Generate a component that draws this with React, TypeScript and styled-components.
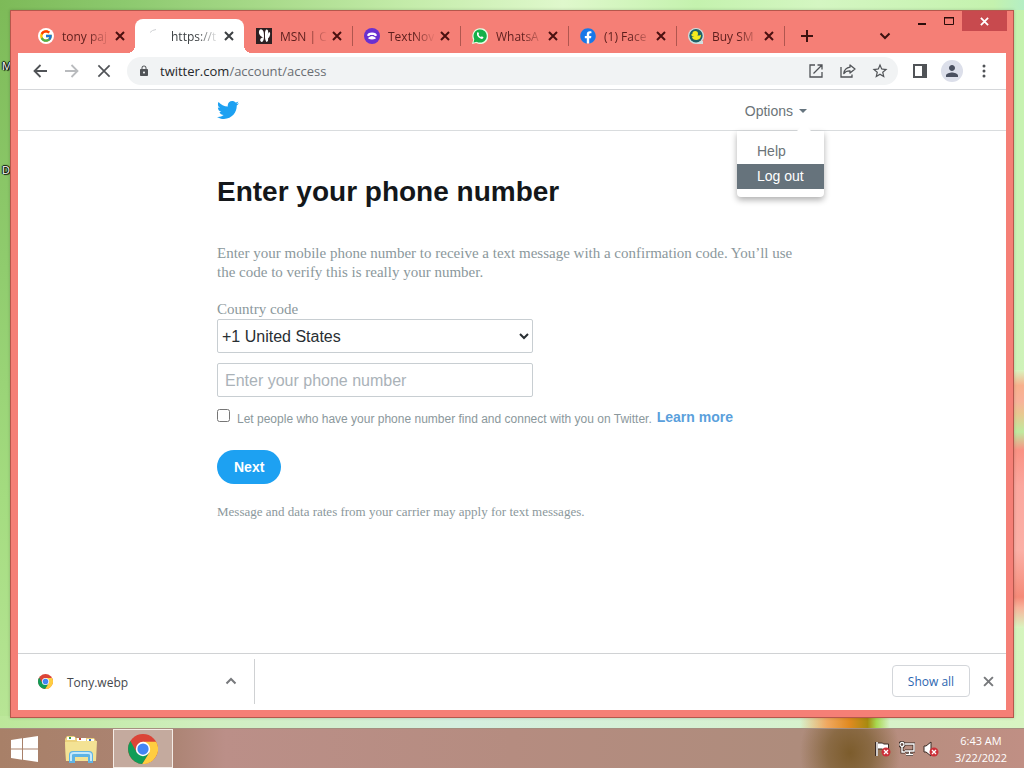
import React from "react";
import styled, { createGlobalStyle, css } from "styled-components";
import { FaTwitter, FaFacebook, FaWhatsapp } from "react-icons/fa";
import { FcGoogle } from "react-icons/fc";
import { MdOutlineStarBorder, MdLock, MdPerson } from "react-icons/md";

const uiFont = '"Open Sans", "Noto Sans", sans-serif';
const pageFont = '"Liberation Sans", Arial, sans-serif';
const textFont = '"Liberation Serif", "Times New Roman", serif';

const GlobalStyle = createGlobalStyle`
  *, *::before, *::after { box-sizing: border-box; }
  body { margin: 0; }
  h1, p { margin: 0; }
  button { font: inherit; color: inherit; background: none; border: 0; padding: 0; }
  svg { display: block; flex: none; }
`;

/* ---------- desktop ---------- */

const Desktop = styled.div`
  position: relative;
  display: flex;
  flex-direction: column;
  min-height: 100vh;
  font-family: ${uiFont};
  background:
    linear-gradient(90deg, transparent 0, #f0a860 30%, #e08a20 55%, #a88a10 75%, #a8d850 85%, transparent 100%) 800px 100% / 90px 52px no-repeat,
    linear-gradient(#d8f5c0 0, #f8b08c 6%, #f8b29a 12%, #e8c890 17%, #bfeaa0 24%, #fa9284 31%, #fba79e 45%, #fbb0a6 70%, #f58a78 88%, #f8b29a 92%, #d8f5c0 100%) right 370px / 12px 258px no-repeat,
    linear-gradient(90deg, #bce79a 0, #d0efbf 20%, #d4efdf 45%, #d8f4c2 100%) left bottom / 100% 52px no-repeat,
    linear-gradient(90deg, #7dba58 0, #8cc96e 12%, #a8da8a 26%, #c4ecaa 40%, #dff8cc 55%, #c4f2ae 68%, #d4f6c2 80%, #c4f2ae 97%, #b4eec4 100%) left top / 100% 10px no-repeat,
    linear-gradient(#7dba58 0, #90cc6e 35%, #a4dc80 65%, #bce79a 100%) left top / 50% 100% no-repeat,
    linear-gradient(#c4f2ae 0, #cdf2b8 40%, #d8f5c0 100%);
`;

const DesktopLabel = styled.span<{ $y: number }>`
  position: absolute;
  left: 2px;
  top: ${(p) => p.$y}px;
  font-size: 11px;
  line-height: 16px;
  color: #fff;
  text-shadow: 1px 1px 1px #000, -1px 0 1px #000, 0 -1px 1px #000, 1px 0 1px #000;
`;

const WorkArea = styled.div`
  position: relative;
  display: flex;
  flex: 1;
  padding: 10px;
`;

const Window = styled.section`
  display: flex;
  flex: 1;
  flex-direction: column;
  min-width: 0;
  padding: 0 7px 7px;
  border: 1px solid #b5574c;
  background: #f57f76;
  box-shadow: 0 0 3px #00000030;
`;

/* ---------- title bar ---------- */

const TitleBar = styled.header`
  display: flex;
  align-items: flex-end;
  height: 42px;
  padding-left: 8px;
`;

const TabList = styled.div`
  display: flex;
`;

const Tab = styled.div<{ $width: number; $active?: boolean; $divider?: boolean }>`
  position: relative;
  display: flex;
  align-items: center;
  width: ${(p) => p.$width}px;
  height: 34px;
  padding: 0 9px 0 12px;
  font-size: 12px;
  color: #5c1e1c;

  ${(p) =>
    p.$divider &&
    css`
      &::after {
        content: "";
        position: absolute;
        right: -1px;
        top: 7px;
        width: 1px;
        height: 20px;
        background: #b0564f;
      }
    `}

  ${(p) =>
    p.$active &&
    css`
      color: #3c4043;
      background: #fff;
      border-radius: 8px 8px 0 0;

      &::before,
      &::after {
        content: "";
        position: absolute;
        bottom: 0;
        width: 8px;
        height: 8px;
      }
      &::before {
        left: -8px;
        background: radial-gradient(circle at 0 0, transparent 8px, #fff 8px);
      }
      &::after {
        right: -8px;
        background: radial-gradient(circle at 100% 0, transparent 8px, #fff 8px);
      }
    `}
`;

const Favicon = styled.span`
  display: flex;
  width: 16px;
  height: 16px;
  margin-right: 8px;
`;

const TabTitle = styled.span`
  flex: 1;
  min-width: 0;
  white-space: nowrap;
  mask-image: linear-gradient(90deg, #000 26px, transparent 48px);
`;

const TabClose = styled.button<{ $dark?: boolean }>`
  display: grid;
  place-items: center;
  width: 12px;
  height: 16px;
  color: ${(p) => (p.$dark ? "#3c4043" : "#4a1010")};
`;

const StripButton = styled.button`
  display: grid;
  place-items: center;
  width: 28px;
  height: 34px;
  margin-left: 9px;
  color: #3d1210;
`;

const Spacer = styled.div`
  flex: 1;
`;

const WindowControls = styled.div`
  display: flex;
  align-self: flex-start;
  margin: 0 -1px 0 9px;
`;

const WindowButton = styled.button<{ $close?: boolean }>`
  display: grid;
  place-items: center;
  width: ${(p) => (p.$close ? 45 : 27)}px;
  height: 20px;
  color: ${(p) => (p.$close ? "#fff" : "#2b0c0a")};
  background: ${(p) => (p.$close ? "#c84a4e" : "none")};
`;

/* ---------- toolbar ---------- */

const Toolbar = styled.div`
  display: flex;
  align-items: center;
  height: 37px;
  padding: 0 6px;
  background: #fff;
  border-bottom: 1px solid #d5d7da;
  color: #505357;
`;

const ToolButton = styled.button<{ $muted?: boolean }>`
  display: grid;
  place-items: center;
  width: 32px;
  height: 28px;
  color: ${(p) => (p.$muted ? "#b9bbbe" : "inherit")};
`;

const Omnibox = styled.div`
  display: flex;
  flex: 1;
  align-items: center;
  min-width: 0;
  height: 28px;
  margin: 0 6px 0 7px;
  padding: 0 2px 0 11px;
  border-radius: 14px;
  background: #f1f3f4;
`;

const Address = styled.div`
  flex: 1;
  min-width: 0;
  margin-left: 10px;
  overflow: hidden;
  white-space: nowrap;
  font-size: 13px;
  color: #6a6e73;
`;

const Host = styled.span`
  color: #26282b;
`;

const Avatar = styled.span`
  display: grid;
  place-items: center;
  width: 22px;
  height: 22px;
  border-radius: 50%;
  background: #dcdfea;
  color: #4a5060;
`;

/* ---------- page ---------- */

const Page = styled.div`
  flex: 1;
  background: #fff;
  font-family: ${pageFont};
`;

const PageHeader = styled.div`
  height: 41px;
  border-bottom: 1px solid #d9dcde;
`;

const Column = styled.div`
  max-width: 590px;
  margin: 0 auto;
`;

const HeaderRow = styled(Column)`
  display: flex;
  align-items: center;
  justify-content: space-between;
  height: 40px;
`;

const BirdLink = styled.a`
  color: #1da1f2;
`;

const OptionsMenu = styled.div`
  position: relative;
`;

const OptionsButton = styled.button`
  display: flex;
  align-items: center;
  gap: 6px;
  height: 40px;
  padding-top: 2px;
  font-size: 14px;
  color: #6c7478;
`;

const Caret = styled.span`
  border: 4px solid transparent;
  border-top-color: #66757f;
  border-bottom: 0;
`;

const Menu = styled.div`
  position: absolute;
  z-index: 1;
  top: 41px;
  right: -17px;
  width: 87px;
  padding: 8px 0;
  background: #fff;
  border-radius: 0 0 4px 4px;
  box-shadow: 0 3px 6px #00000050;

  &::before {
    content: "";
    position: absolute;
    top: -7px;
    right: 12px;
    border: 8px solid transparent;
    border-top: 0;
    border-bottom-color: #fff;
  }
`;

const MenuItem = styled.a<{ $selected?: boolean }>`
  display: block;
  padding-left: 20px;
  font-size: 14px;
  line-height: 25px;
  text-decoration: none;
  color: ${(p) => (p.$selected ? "#fff" : "#6c7478")};
  background: ${(p) => (p.$selected ? "#66737c" : "none")};
`;

const Form = styled.form`
  display: flex;
  flex-direction: column;
  align-items: flex-start;
  padding: 45px 0 24px;
`;

const Title = styled.h1`
  font-size: 28px;
  line-height: 32px;
  color: #14171a;
`;

const Intro = styled.p`
  margin-top: 36px;
  font-family: ${textFont};
  font-size: 15px;
  line-height: 19px;
  color: #8b989c;
`;

const FieldLabel = styled.label`
  margin-top: 18px;
  font-family: ${textFont};
  font-size: 15px;
  line-height: 19px;
  color: #8b989c;
`;

const fieldBox = css`
  width: 316px;
  max-width: 100%;
  height: 34px;
  border: 1px solid #c8ced2;
  border-radius: 2px;
  background: #fff;
  font-family: ${pageFont};
  font-size: 16px;
`;

const CountrySelect = styled.select`
  ${fieldBox}
  padding: 0;
  color: #292f33;
`;

const PhoneInput = styled.input`
  ${fieldBox}
  margin-top: 10px;
  padding: 2px 7px 0;
  color: #292f33;

  &::placeholder {
    color: #aab2b8;
  }
`;

const ConsentRow = styled.div`
  display: flex;
  align-items: center;
  gap: 5px;
  margin-top: 10px;
  height: 20px;
  font-size: 12px;
  color: #8b989c;
`;

const Checkbox = styled.input`
  width: 13px;
  height: 13px;
  margin: 0 2px 4px 0;
`;

const ConsentLabel = styled.label`
  padding-top: 3px;
`;

const LearnMore = styled.a`
  font-size: 14px;
  font-weight: bold;
  text-decoration: none;
  color: #5a9fdc;
`;

const NextButton = styled.button`
  height: 34px;
  margin-top: 23px;
  padding: 0 17px;
  border-radius: 17px;
  background: #1da1f2;
  font-size: 14px;
  font-weight: bold;
  color: #fff;
`;

const RatesNote = styled.p`
  margin-top: 20px;
  font-family: ${textFont};
  font-size: 13px;
  line-height: 16px;
  color: #8b989c;
`;

/* ---------- download shelf ---------- */

const Shelf = styled.div`
  display: flex;
  align-items: center;
  height: 57px;
  padding: 0 8px 2px 20px;
  border-top: 1px solid #d0d2d4;
  background: #fff;
  color: #77797c;
`;

const Download = styled.div`
  display: flex;
  align-items: center;
  width: 217px;
  height: 45px;
  padding-right: 17px;
  border-right: 1px solid #cfd1d3;
`;

const FileName = styled.span`
  flex: 1;
  margin-left: 14px;
  padding-top: 2px;
  font-size: 12px;
  color: #45484c;
`;

const ShowAll = styled.button`
  width: 78px;
  height: 32px;
  margin-right: 8px;
  border: 1px solid #d3d6da;
  border-radius: 4px;
  font-size: 12px;
  font-weight: 500;
  color: #2c66b0;
`;

const ShelfClose = styled.button`
  display: grid;
  place-items: center;
  width: 20px;
  height: 20px;
`;

/* ---------- taskbar ---------- */

const Taskbar = styled.footer`
  position: relative;
  display: flex;
  align-items: center;
  height: 40px;
  padding-right: 17px;
  border-top: 1px solid #a58f80;
  background:
    radial-gradient(50px 60px at 850px 24px, #7c5c2c 0, #84653cdd 45%, transparent 100%),
    linear-gradient(90deg, #a88068 0, #ac8474 17%, #bb8f88 22%, #b58c80 50%, #ae8c7c 78%, #b98e80 90%, #c08f84 100%);
`;

const TaskButton = styled.button<{ $width: number; $running?: boolean }>`
  display: grid;
  place-items: center;
  width: ${(p) => p.$width}px;
  height: 39px;
  border: ${(p) => (p.$running ? "1px solid #f4ece6" : "0")};
  background: ${(p) => (p.$running ? "#c4aa9e" : "none")};
`;

const Tray = styled.div`
  display: flex;
  gap: 8px;
  margin-right: 16px;
`;

const Clock = styled.div`
  font-size: 11px;
  line-height: 17px;
  text-align: center;
  color: #fff;
`;

/* ---------- drawings ---------- */

const Cross = ({ size, weight = 2 }: { size: number; weight?: number }) => (
  <svg width={size} height={size} viewBox="0 0 10 10" fill="none" stroke="currentColor" strokeWidth={weight}>
    <path d="M1 1l8 8M9 1L1 9" />
  </svg>
);

const ChromeLogo = ({ size }: { size: number }) => (
  <svg width={size} height={size} viewBox="0 0 48 48">
    <circle cx="24" cy="24" r="24" fill="#db4437" />
    <path d="M24 12.500h21A24 24 0 0 1 22.500 48L34 29.700z" fill="#ffcd40" />
    <path d="M14 29.700L3.800 11.200A24 24 0 0 0 22.500 48L34 29.700 24 34z" fill="#0f9d58" />
    <circle cx="24" cy="24" r="11.500" fill="#fff" />
    <circle cx="24" cy="24" r="9" fill="#4285f4" />
  </svg>
);

const GoogleIcon = () => (
  <svg width="16" height="16" viewBox="0 0 16 16">
    <circle cx="8" cy="8" r="8" fill="#fff" />
    <FcGoogle x="1" y="1" size={14} />
  </svg>
);

const LoadingIcon = () => (
  <svg width="16" height="16" viewBox="0 0 16 16" fill="none" stroke="#cfd1d4">
    <path d="M3 4.500Q5 2 9 1.500" />
  </svg>
);

const ButterflyIcon = () => (
  <svg width="16" height="16" viewBox="0 0 16 16">
    <path d="M0 0h16v16H0z" fill="#2e2022" />
    <path d="M8 9.500C4.500 9 2.500 6 3 3.500S5 .5 6.500 2 8 6 8 9.500zM8 9.500C5.500 9 3.500 11 4.500 13S7.500 14 8 9.500z" fill="#fff" />
    <path d="M9 9.500C8.500 6 9 2 10.500 1.500s2 2 1.500 4L10 9l3-5q1.500 0 1 3-.5 2-2 3.500.5 3-1.500 3.500S9 12 9 9.500z" fill="#fff" />
    <path d="M8.500 5v9" stroke="#2e2022" />
  </svg>
);

const PhoneIcon = () => (
  <svg width="16" height="16" viewBox="0 0 16 16">
    <circle cx="8" cy="8" r="8" fill="#6a30cf" />
    <path d="M3 7.500Q3.500 4.500 8 4.500t5 3l-2 .8-1.200-1.300H6.200L5 8.300z" fill="#fff" />
    <path d="M4.500 9.500Q6.500 8 8 8t3.500 1.500l.2 1.300q-3.700 1.500-7.400 0z" fill="#fff" />
  </svg>
);

const WhatsAppIcon = () => (
  <svg width="16" height="16" viewBox="0 0 16 16">
    <path d="M0 16l1.200-4.200A8 8 0 1 1 4.200 15z" fill="#e9fbe4" />
    <path d="M1.500 14.500l.9-3.200a6.600 6.600 0 1 1 2.400 2.400z" fill="#17b04a" />
    <FaWhatsapp x="1" y="1" size={14} color="#17b04a" />
    <path d="M5 4.500l1.300-.3.800 1.800-.6.800q.8 1.600 2.500 2.300l.8-.8 1.700.9q-.1 1.600-1.800 1.700Q8 10.800 6.200 9 4.400 7 5 4.500z" fill="#fff" />
  </svg>
);

const FacebookIcon = () => (
  <svg width="16" height="16" viewBox="0 0 16 16">
    <circle cx="8" cy="8.500" r="7" fill="#fff" />
    <FaFacebook size={16} color="#1877e8" />
  </svg>
);

const DuckIcon = () => (
  <svg width="16" height="16" viewBox="0 0 16 16">
    <circle cx="8" cy="8" r="8" fill="#cfe0e0" />
    <path d="M9 13h6v3H9z" fill="#cfe0e0" />
    <circle cx="8" cy="7.800" r="6.700" fill="#1f6066" />
    <circle cx="7.200" cy="5.800" r="2.800" fill="#f4ea1e" />
    <path d="M3 6.500l2-.5 1 2-2 .3z" fill="#f4ea1e" />
    <path d="M4 9q2-1.500 5-1.500 2 .3 4-.8 0 5-4.500 5.300Q4.500 12 4 9z" fill="#f4ea1e" />
  </svg>
);

const WindowsLogo = () => (
  <svg width="27" height="26" viewBox="0 0 27 26" fill="#fff">
    <path d="M0 4l11-1.700V12.500H0zM12 2.200L27 0v12.500H12zM0 13.500h11v10.200L0 22zM12 13.500h15V26l-15-2.200z" />
  </svg>
);

const FolderIcon = () => (
  <svg width="34" height="30" viewBox="0 0 34 30">
    <path d="M1 5l2-3h7l2 2h18l2 3v20H2z" fill="#ecd27c" />
    <path d="M3 3h8v3H3zM13 4h9v3h-9zM23 5h7v3h-7z" fill="#fff" />
    <path d="M5 3h2v2H5z" fill="#3c9b48" />
    <path d="M15 4h2v2h-2z" fill="#c84a38" />
    <path d="M25 5h2v2h-2z" fill="#3a72c0" />
    <path d="M1 8h12l2-1h18l-1 20H2z" fill="#f3e294" />
    <path d="M5 29v-8q0-4 4-4h16q4 0 4 4v8h-5v-6H11v6z" fill="#5fb3e4" />
    <path d="M7 27v-6q0-2 3-2h14q3 0 3 2v6" fill="none" stroke="#c4e8fa" strokeWidth="2" />
  </svg>
);

const TrayError = ({ x }: { x: number }) => (
  <g transform={`translate(${x} 7)`}>
    <circle cx="4" cy="4" r="4.500" fill="#cc3038" />
    <path d="M2 2l4 4M6 2L2 6" stroke="#fff" strokeWidth="1.300" />
  </g>
);

const FlagIcon = () => (
  <svg width="16" height="16" viewBox="0 0 16 16">
    <path d="M1.500 1v14" stroke="#3a2a24" strokeWidth="3" />
    <path d="M2.500 2h5l1 1h5v6h-5l-1-1h-5z" fill="#fff" stroke="#3a2a24" />
    <path d="M2 1v14" stroke="#fff" strokeWidth="1.500" />
    <TrayError x={7} />
  </svg>
);

const NetworkIcon = () => (
  <svg width="16" height="16" viewBox="0 0 16 16" fill="none">
    <path d="M6 3h9v7H6M10.500 10v3M7 13.500h7M3 5v6h3" stroke="#3a2a24" strokeWidth="3" />
    <circle cx="3" cy="3.500" r="2" stroke="#3a2a24" strokeWidth="3" />
    <path d="M6 3h9v7H6M10.500 10v3M7 13.500h7M3 5v6h3" stroke="#fff" strokeWidth="1.400" />
    <circle cx="3" cy="3.500" r="2" stroke="#fff" strokeWidth="1.300" />
  </svg>
);

const SpeakerIcon = () => (
  <svg width="16" height="16" viewBox="0 0 16 16">
    <path d="M1 5h2l5-4v14l-5-4H1z" fill="#fff" stroke="#3a2a24" />
    <TrayError x={7} />
  </svg>
);

const tabs = [
  { title: "tony paj", icon: <GoogleIcon />, width: 109 },
  { title: "https://t", icon: <LoadingIcon />, width: 109, active: true },
  { title: "MSN | C", icon: <ButterflyIcon />, width: 108, divider: true },
  { title: "TextNov", icon: <PhoneIcon />, width: 108, divider: true },
  { title: "WhatsA", icon: <WhatsAppIcon />, width: 108, divider: true },
  { title: "(1) Face", icon: <FacebookIcon />, width: 108, divider: true },
  { title: "Buy SM", icon: <DuckIcon />, width: 108, divider: true },
];

export default function App() {
  return (
    <Desktop>
      <GlobalStyle />
      <DesktopLabel $y={58}>M</DesktopLabel>
      <DesktopLabel $y={162}>D</DesktopLabel>
      <WorkArea>
        <Window>
          <TitleBar>
            <TabList>
              {tabs.map((tab) => (
                <Tab key={tab.title} $width={tab.width} $active={tab.active} $divider={tab.divider}>
                  <Favicon>{tab.icon}</Favicon>
                  <TabTitle>{tab.title}</TabTitle>
                  <TabClose $dark={tab.active} aria-label={`Close ${tab.title}`}>
                    <Cross size={10} />
                  </TabClose>
                </Tab>
              ))}
            </TabList>
            <StripButton aria-label="New tab">
              <svg width="12" height="12" viewBox="0 0 12 12" stroke="currentColor" strokeWidth="2">
                <path d="M6 0v12M0 6h12" />
              </svg>
            </StripButton>
            <Spacer />
            <StripButton aria-label="Search tabs">
              <svg width="12" height="8" viewBox="0 0 12 8" fill="none" stroke="currentColor" strokeWidth="2">
                <path d="M1.500 1.500L6 6l4.500-4.500" />
              </svg>
            </StripButton>
            <WindowControls>
              <WindowButton aria-label="Minimize">
                <svg width="10" height="10" viewBox="0 0 10 10" fill="currentColor">
                  <path d="M1 7h8v2H1z" />
                </svg>
              </WindowButton>
              <WindowButton aria-label="Maximize">
                <svg width="10" height="8" viewBox="0 0 10 8" fill="none" stroke="currentColor">
                  <path d="M.5 1v6.500h9V1M0 1h10" />
                  <path d="M0 .5h10" />
                </svg>
              </WindowButton>
              <WindowButton $close aria-label="Close window">
                <Cross size={9} />
              </WindowButton>
            </WindowControls>
          </TitleBar>

          <Toolbar>
            <ToolButton aria-label="Back">
              <svg width="14" height="14" viewBox="0 0 14 14" fill="none" stroke="currentColor" strokeWidth="1.800">
                <path d="M14 7H1.500M7.500 1L1.500 7l6 6" />
              </svg>
            </ToolButton>
            <ToolButton $muted aria-label="Forward">
              <svg width="14" height="14" viewBox="0 0 14 14" fill="none" stroke="currentColor" strokeWidth="1.800">
                <path d="M0 7h12.500M6.500 1l6 6-6 6" />
              </svg>
            </ToolButton>
            <ToolButton aria-label="Stop loading">
              <Cross size={14} weight={1.2} />
            </ToolButton>
            <Omnibox>
              <MdLock size={12} />
              <Address>
                <Host>twitter.com</Host>/account/access
              </Address>
              <ToolButton aria-label="Open in new window">
                <svg width="14" height="14" viewBox="0 0 14 14" fill="none" stroke="currentColor" strokeWidth="1.300">
                  <path d="M6 1H1v12h12V8M8.500 1H13v4.500M13 1L4.500 9.500" />
                </svg>
              </ToolButton>
              <ToolButton aria-label="Share">
                <svg width="16" height="14" viewBox="0 0 16 14" fill="none" stroke="currentColor" strokeWidth="1.300">
                  <path d="M1 3v10h11v-2.500" />
                  <path d="M10 1l5 4-5 4V6.800Q6 6.600 3.800 9.500 4.500 4 10 3.200z" strokeLinejoin="round" />
                </svg>
              </ToolButton>
              <ToolButton aria-label="Bookmark">
                <MdOutlineStarBorder size={18} />
              </ToolButton>
            </Omnibox>
            <ToolButton aria-label="Side panel">
              <svg width="14" height="14" viewBox="0 0 14 14" fill="currentColor">
                <path d="M0 0h14v14H0zM2 2v10h7V2z" fillRule="evenodd" />
              </svg>
            </ToolButton>
            <ToolButton aria-label="Profile">
              <Avatar>
                <MdPerson size={18} />
              </Avatar>
            </ToolButton>
            <ToolButton aria-label="Menu">
              <svg width="4" height="14" viewBox="0 0 4 14" fill="currentColor">
                <circle cx="2" cy="2" r="1.500" />
                <circle cx="2" cy="7" r="1.500" />
                <circle cx="2" cy="12" r="1.500" />
              </svg>
            </ToolButton>
          </Toolbar>

          <Page>
            <PageHeader>
              <HeaderRow>
                <BirdLink href="#home" aria-label="Twitter">
                  <FaTwitter size={22} />
                </BirdLink>
                <OptionsMenu>
                  <OptionsButton aria-expanded="true">
                    Options <Caret />
                  </OptionsButton>
                  <Menu>
                    <MenuItem href="#help">Help</MenuItem>
                    <MenuItem href="#logout" $selected>
                      Log out
                    </MenuItem>
                  </Menu>
                </OptionsMenu>
              </HeaderRow>
            </PageHeader>
            <Column>
              <Form onSubmit={(e) => e.preventDefault()}>
                <Title>Enter your phone number</Title>
                <Intro>
                  Enter your mobile phone number to receive a text message with a confirmation code. You’ll use the code
                  to verify this is really your number.
                </Intro>
                <FieldLabel htmlFor="country">Country code</FieldLabel>
                <CountrySelect id="country">
                  <option>+1 United States</option>
                </CountrySelect>
                <PhoneInput type="tel" aria-label="Phone number" placeholder="Enter your phone number" />
                <ConsentRow>
                  <Checkbox type="checkbox" id="discoverable" />
                  <ConsentLabel htmlFor="discoverable">
                    Let people who have your phone number find and connect with you on Twitter.
                  </ConsentLabel>
                  <LearnMore href="#learn">Learn more</LearnMore>
                </ConsentRow>
                <NextButton type="submit">Next</NextButton>
                <RatesNote>Message and data rates from your carrier may apply for text messages.</RatesNote>
              </Form>
            </Column>
          </Page>

          <Shelf>
            <Download>
              <ChromeLogo size={15} />
              <FileName>Tony.webp</FileName>
              <svg width="12" height="8" viewBox="0 0 12 8" fill="none" stroke="currentColor" strokeWidth="2">
                <path d="M1.500 6.500L6 2l4.500 4.500" />
              </svg>
            </Download>
            <Spacer />
            <ShowAll>Show all</ShowAll>
            <ShelfClose aria-label="Close downloads bar">
              <Cross size={11} weight={1.8} />
            </ShelfClose>
          </Shelf>
        </Window>
      </WorkArea>

      <Taskbar>
        <TaskButton $width={48} aria-label="Start">
          <WindowsLogo />
        </TaskButton>
        <TaskButton $width={65} aria-label="File Explorer">
          <FolderIcon />
        </TaskButton>
        <TaskButton $width={60} $running aria-label="Chrome">
          <ChromeLogo size={30} />
        </TaskButton>
        <Spacer />
        <Tray>
          <FlagIcon />
          <NetworkIcon />
          <SpeakerIcon />
        </Tray>
        <Clock>
          6:43 AM
          <br />
          3/22/2022
        </Clock>
      </Taskbar>
    </Desktop>
  );
}
